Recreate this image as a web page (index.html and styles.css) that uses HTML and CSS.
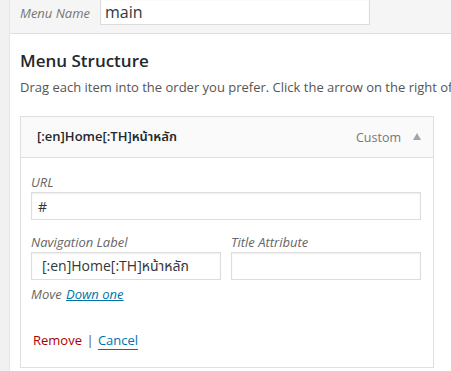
FILE: index.html
```html
<!DOCTYPE html>
<html lang="en">
<head>
    <meta charset="UTF-8">
    <meta name="viewport" content="width=device-width, initial-scale=1.0">
    <title>Menus</title>
    <link rel="stylesheet" href="styles.css">
</head>
<body>
    <div id="menuPanel">
        <div id="menuHeader">
            <label class="menuNameLabel" for="menuName">Menu Name</label>
            <input type="text" id="menuName" value="main">
        </div>
        <div id="menuBody">
            <h3 id="structureTitle">Menu Structure</h3>
            <p class="hint">Drag each item into the order you prefer. Click the arrow on the right of the item to reveal additional configuration options.</p>

            <div class="menuItem">
                <div class="itemBar">
                    <span class="itemTitle">[:en]Home[:TH]หน้าหลัก</span>
                    <span class="itemControls">
                        <span class="itemType">Custom</span>
                        <span class="itemToggle"></span>
                    </span>
                </div>
                <div class="itemSettings">
                    <label class="fieldLabel">URL</label>
                    <input type="text" class="wideInput" value="#">
                    <div class="fieldRow">
                        <div class="fieldCol">
                            <label class="fieldLabel">Navigation Label</label>
                            <input type="text" class="halfInput" value="[:en]Home[:TH]หน้าหลัก">
                        </div>
                        <div class="fieldCol">
                            <label class="fieldLabel">Title Attribute</label>
                            <input type="text" class="halfInput" value="">
                        </div>
                    </div>
                    <div class="moveRow">
                        <span class="moveLabel">Move</span>
                        <a href="#" class="moveLink">Down one</a>
                    </div>
                    <div class="actions">
                        <a href="#" class="removeLink">Remove</a>
                        <span class="sep">|</span>
                        <a href="#" class="cancelLink">Cancel</a>
                    </div>
                </div>
            </div>
        </div>
    </div>
</body>
</html>
```

FILE: styles.css
```css
* {
    box-sizing: border-box;
    font-family: "Open Sans", "Noto Sans Thai", "Noto Sans", sans-serif;
}

body {
    margin: 0;
    background-color: #f1f1f1;
    color: #444;
    font-size: 13px;
    overflow: hidden;
}

#menuPanel {
    margin-left: 9px;
    height: 100vh;
    background-color: #fff;
    border-left: 1px solid #e5e5e5;
}

#menuHeader {
    display: flex;
    align-items: flex-start;
    height: 34px;
    padding-left: 10px;
    background-color: #f5f5f5;
    border-bottom: 1px solid #dfdfdf;
}

.menuNameLabel {
    font-style: italic;
    color: #777;
    padding-top: 4px;
    width: 80px;
}

#menuName {
    width: 270px;
    height: 27px;
    margin-top: -2px;
    padding: 0 4px;
    border: 1px solid #ddd;
    background: #fff;
    font-size: 16px;
    color: #32373c;
    box-shadow: inset 0 1px 2px rgba(0, 0, 0, 0.07);
}

#menuBody {
    padding: 0 10px;
}

#structureTitle {
    margin: 15px 0 0;
    font-size: 17px;
    font-weight: 600;
    color: #23282d;
}

.hint {
    margin: 6px 0 20px;
    white-space: nowrap;
    color: #555;
}

.menuItem {
    width: 414px;
    border: 1px solid #dfdfdf;
}

.itemBar {
    display: flex;
    justify-content: space-between;
    align-items: center;
    height: 41px;
    padding: 0 12px 0 16px;
    background-color: #fafafa;
    border-bottom: 1px solid #dfdfdf;
}

.itemTitle {
    font-weight: 600;
    color: #23282d;
}

.itemControls {
    display: flex;
    align-items: center;
    gap: 12px;
}

.itemType {
    color: #777;
    font-size: 12.5px;
}

.itemToggle {
    width: 0;
    height: 0;
    border-left: 4px solid transparent;
    border-right: 4px solid transparent;
    border-bottom: 7px solid #a0a5aa;
    margin-bottom: 2px;
}

.itemSettings {
    padding: 15px 10px 17px;
}

.fieldLabel {
    display: block;
    font-style: italic;
    color: #666;
    line-height: 18px;
}

.wideInput,
.halfInput {
    display: block;
    height: 28px;
    margin-top: 1px;
    padding: 0 6px;
    border: 1px solid #ddd;
    background: #fff;
    font-size: 14px;
    color: #32373c;
    box-shadow: inset 0 1px 2px rgba(0, 0, 0, 0.07);
}

.wideInput {
    width: 390px;
}

.halfInput {
    width: 190px;
    padding: 0 10px;
}

.fieldRow {
    display: flex;
    gap: 10px;
    margin-top: 13px;
}

.moveRow {
    margin-top: 5px;
    line-height: 18px;
}

.moveLabel {
    font-style: italic;
    color: #666;
}

.moveLink {
    font-style: italic;
    color: #0073aa;
    margin-left: 1px;
}

.actions {
    margin-top: 27px;
    padding-left: 2px;
    line-height: 20px;
}

.actions a {
    text-decoration: none;
}

.removeLink {
    color: #a00;
}

.sep {
    color: #555;
    margin: 0 1px;
}

.cancelLink {
    color: #0073aa;
    border-bottom: 1px solid #0073aa;
}
```
